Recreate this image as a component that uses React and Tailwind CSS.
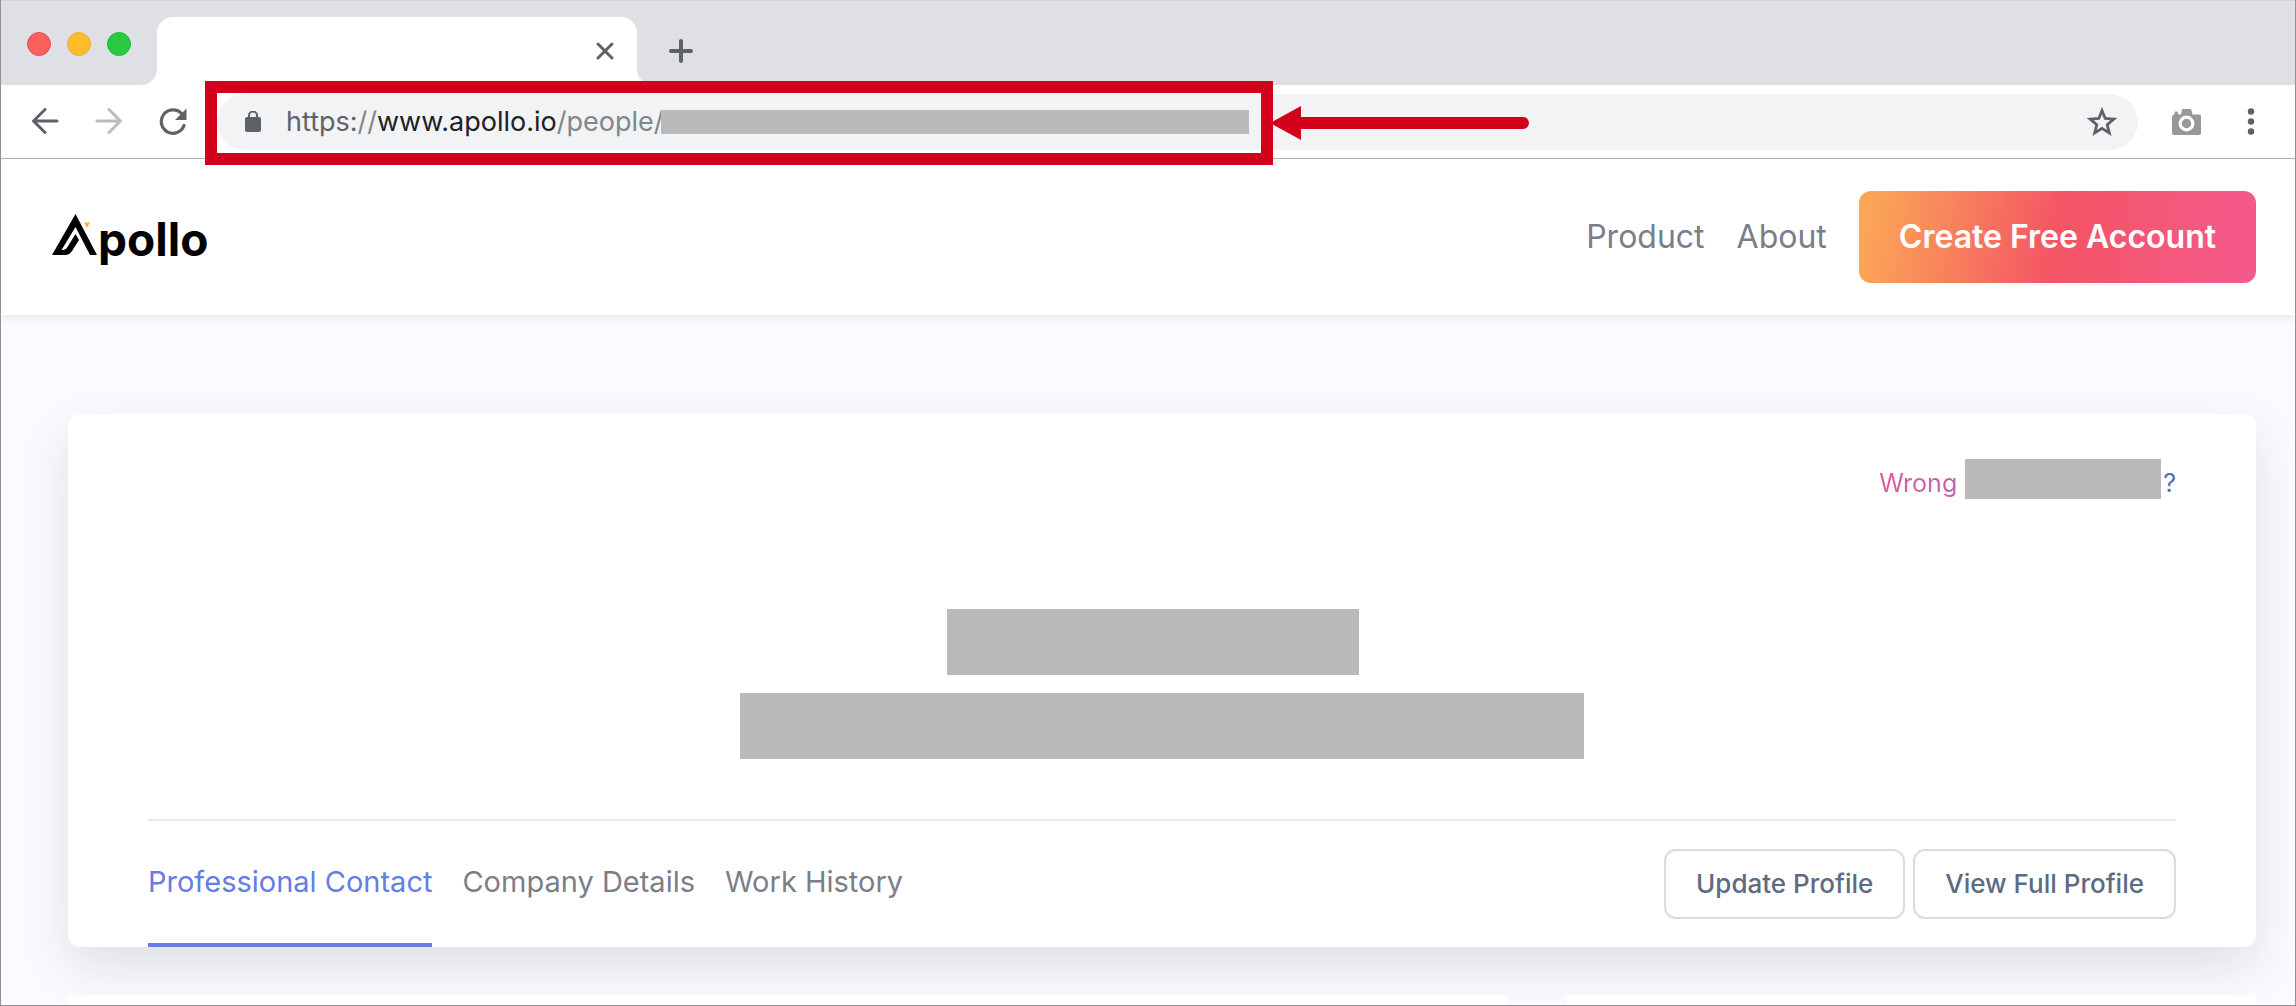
const Redacted = ({ className }) => <span className={`block shrink-0 bg-[#bababa] ${className}`} />;

function TabStrip() {
  return (
    <div className="flex h-[85px] border-t border-[#d5d5d5] bg-[#dee0e6]">
      <div className="flex w-[156px] items-center gap-4 pt-[2px] pl-[26px]">
        <button aria-label="Close window" className="size-6 rounded-full border border-[#e4514c] bg-[#fc605c]" />
        <button aria-label="Minimize window" className="size-6 rounded-full border border-[#eeb02e] bg-[#fdbc2c]" />
        <button aria-label="Zoom window" className="size-6 rounded-full border border-[#24b83a] bg-[#28ca41]" />
      </div>
      <div className="relative mt-4 flex w-[480px] items-center justify-end rounded-t-2xl bg-white pr-[22px]">
        <svg className="absolute right-full bottom-0 size-4" viewBox="0 0 16 16" fill="#fff"><path d="M16 0V16H0A16 16 0 0 0 16 0Z" /></svg>
        <svg className="absolute left-full bottom-0 size-4" viewBox="0 0 16 16" fill="#fff"><path d="M0 0V16H16A16 16 0 0 1 0 0Z" /></svg>
        <button aria-label="Close tab">
          <svg className="size-5" viewBox="0 0 20 20" stroke="#5f6168" strokeWidth="3" strokeLinecap="round"><path d="M3 3L17 17M17 3L3 17" /></svg>
        </button>
      </div>
      <button aria-label="New tab" className="mt-4 ml-8">
        <svg className="size-6" viewBox="0 0 24 24" stroke="#5f6168" strokeWidth="4" strokeLinecap="round"><path d="M12 2V22M2 12H22" /></svg>
      </button>
    </div>
  );
}

function Toolbar() {
  return (
    <div className="relative flex h-[74px] items-center border-b border-[#b4b5b7] bg-white pr-10">
      <div className="flex w-[216px] items-center gap-9 pl-[30px]">
        <button aria-label="Back">
          <svg className="size-7" viewBox="0 0 28 28" fill="none" stroke="#5f6168" strokeWidth="3" strokeLinecap="round" strokeLinejoin="round"><path d="M26 13H2.5M14 1.500L2.500 13L14 24.500" /></svg>
        </button>
        <button aria-label="Forward">
          <svg className="size-7" viewBox="0 0 28 28" fill="none" stroke="#bbbcbf" strokeWidth="3" strokeLinecap="round" strokeLinejoin="round"><path d="M2 13H25.5M14 1.500L25.500 13L14 24.500" /></svg>
        </button>
        <button aria-label="Reload">
          <svg className="size-7" viewBox="0 0 28 28" fill="none"><path d="M25 17.500A11.700 11.700 0 1 1 22.500 5.500" stroke="#5f6168" strokeWidth="3.2" strokeLinecap="round" /><path d="M27.5 0.500V12H16Z" fill="#5f6168" /></svg>
        </button>
      </div>
      <div className="flex h-14 flex-1 items-center rounded-full bg-[#f1f3f5] pr-5 pl-7">
        <svg className="h-[22px] w-4 shrink-0" viewBox="0 0 16 22"><rect y="6" width="16" height="15" rx="2" fill="#5f6168" /><path d="M4 7V4.500A4 4 0 0 1 12 4.500V7" fill="none" stroke="#5f6168" strokeWidth="2" /></svg>
        <p className="ml-[25px] w-[375px] text-[27px] leading-8 whitespace-nowrap text-[#80868b]">
          <span className="text-[#5f6368]">https:</span>//<span className="text-[#202124]">www.apollo.io</span>/people/
        </p>
        <Redacted className="h-6 w-[588px]" />
        <button aria-label="Bookmark this page" className="ml-auto">
          <svg className="size-8" viewBox="0 0 32 32" fill="none" stroke="#5f6168" strokeWidth="2.8"><path d="M16 4.5L19.2 12.5L27.8 13.1L21.2 18.7L23.3 27L16 22.4L8.7 27L10.8 18.7L4.2 13.1L12.8 12.5Z" /></svg>
        </button>
      </div>
      <button aria-label="Screenshot extension" className="ml-8">
        <svg className="size-8" viewBox="0 0 32 32"><path d="M2 10L4 8.500L5 5.500L7.500 5.500L8.500 8.500H11L12 3H21L22.5 8.5H29A2 2 0 0 1 31 10.5V27A2 2 0 0 1 29 29H4A2 2 0 0 1 2 27Z" fill="#969899" /><circle cx="16.5" cy="17.5" r="6.3" fill="none" stroke="#fff" strokeWidth="3.2" /></svg>
      </button>
      <button aria-label="Menu" className="ml-[45px]">
        <svg className="h-8 w-2" viewBox="0 0 8 32" fill="#5f6168"><circle cx="4" cy="5.500" r="3.2" /><circle cx="4" cy="15.500" r="3.2" /><circle cx="4" cy="25.500" r="3.2" /></svg>
      </button>
      <div className="pointer-events-none absolute -top-1 left-[204px] z-10 h-[84px] w-[1068px] border-[12px] border-[#d2001a]" />
      <svg className="pointer-events-none absolute top-5 left-[1269px] z-10 h-9 w-[260px]" viewBox="0 0 260 36" fill="#d2001a"><path d="M0 18L31 1V12H253A6 6 0 0 1 253 24H31V35Z" /></svg>
    </div>
  );
}

function Logo() {
  return (
    <a href="#" aria-label="Apollo" className="flex items-start pt-1">
      <svg className="h-[42px] w-[46px]" viewBox="0 0 46 42"><path d="M23.5 0L45 41H38L23.5 13L9.5 36H11.5Q14 36 15.5 33L23.5 20L27 26L20 37Q17.5 41 13 41H0Z" /><path d="M32 8.5H38L35 14Z" fill="#fdb82e" /></svg>
      <span className="text-[46px] leading-[50px] font-bold text-black">pollo</span>
    </a>
  );
}

function SiteHeader() {
  return (
    <header className="relative flex h-[156px] items-center bg-white pr-[39px] pl-[51px] shadow-[0_2px_8px_rgba(30,30,60,0.1)]">
      <Logo />
      <nav className="ml-auto flex items-center gap-8 text-[32px] leading-10 text-[#7b7e88]">
        <a href="#">Product</a>
        <a href="#">About</a>
        <button className="h-[92px] rounded-xl bg-[linear-gradient(100deg,#fba656_3%,#f45564_50%,#f4598a_95%)] px-10 font-semibold text-white">Create Free Account</button>
      </nav>
    </header>
  );
}

function ProfileCard() {
  const outline = "h-[70px] rounded-xl border-2 border-[#d8dce4] bg-white px-[30px] text-[26px] leading-8 font-medium text-[#5d6b82]";
  return (
    <section className="relative rounded-xl bg-white px-20 pt-[45px] shadow-[0_20px_52px_rgba(30,35,70,0.13)]">
      <a href="#" className="flex items-center justify-end text-[25px] leading-8">
        <span className="bg-linear-to-r from-[#db5b98] to-[#c062ab] bg-clip-text pt-2 text-transparent">Wrong</span>
        <Redacted className="ml-2 h-10 w-[196px]" />
        <span className="ml-[2px] pt-2 text-[#5c6bb0]">?</span>
      </a>
      <div className="mt-[110px] flex flex-col items-center gap-[18px]">
        <Redacted className="mr-[18px] h-[66px] w-[412px]" />
        <Redacted className="h-[66px] w-[844px]" />
      </div>
      <div className="mt-[60px] flex items-start justify-between border-t-2 border-[#e8e9f0]">
        <nav className="flex gap-[30px] text-[29px] leading-10 text-[#7b7e88]">
          <a href="#" className="border-b-4 border-[#657de4] pt-[41px] pb-[41px] text-[#657de4]">Professional Contact</a>
          <a href="#" className="pt-[41px]">Company Details</a>
          <a href="#" className="pt-[41px]">Work History</a>
        </nav>
        <div className="mt-7 flex gap-2">
          <button className={outline}>Update Profile</button>
          <button className={outline}>View Full Profile</button>
        </div>
      </div>
    </section>
  );
}

export default function App() {
  return (
    <div className="h-screen overflow-hidden border border-t-0 border-[#929296] bg-[#fafbfe] font-[Inter,sans-serif]">
      <TabStrip />
      <Toolbar />
      <SiteHeader />
      <main className="pt-[99px] pr-[39px] pl-[67px]">
        <ProfileCard />
        <div className="relative mt-12 flex gap-[59px]">
          <div className="h-40 flex-[1440] bg-white" />
          <div className="h-40 flex-[689] bg-white" />
        </div>
      </main>
    </div>
  );
}
